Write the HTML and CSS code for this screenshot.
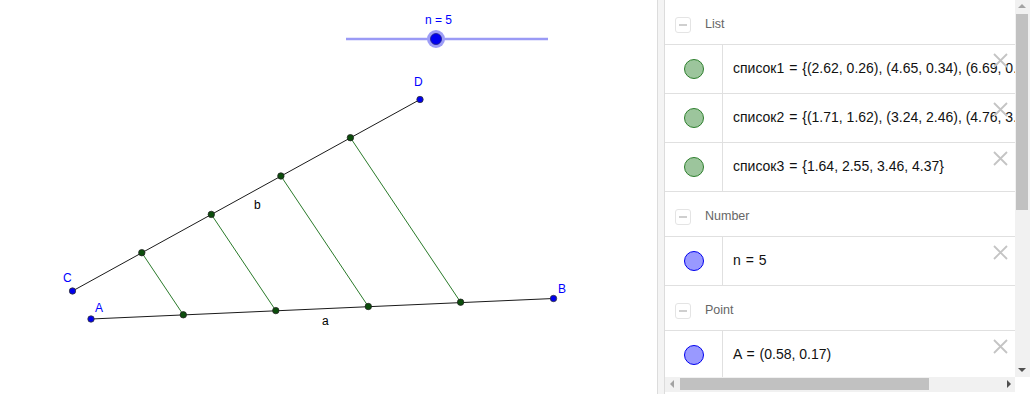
FILE: index.html
```html
<!DOCTYPE html>
<html>
<head>
<meta charset="utf-8">
<link rel="stylesheet" href="styles.css">
</head>
<body>
<div class="app">
  <div class="canvas">
    <svg class="graphics" width="657" height="394" viewBox="0 0 657 394">
      <g class="slider">
        <line x1="346" y1="39" x2="548" y2="39" class="slider-line"/>
        <circle cx="436" cy="39" r="9" class="knob-halo"/>
        <circle cx="436" cy="39" r="5.5" class="knob"/>
        <text x="425" y="24" class="lbl blue">n = 5</text>
      </g>
      <line x1="72.5" y1="291" x2="420" y2="99.5" class="seg"/>
      <line x1="91" y1="319" x2="553.5" y2="298.5" class="seg"/>
      <line x1="141.8" y1="252.7" x2="183.3" y2="314.8" class="gseg"/>
      <line x1="211.3" y1="214.4" x2="275.8" y2="310.6" class="gseg"/>
      <line x1="280.9" y1="176" x2="368.3" y2="306.5" class="gseg"/>
      <line x1="350.4" y1="137.7" x2="460.6" y2="302.2" class="gseg"/>
      <circle cx="141.8" cy="252.7" r="3.2" class="gpt"/>
      <circle cx="211.3" cy="214.4" r="3.2" class="gpt"/>
      <circle cx="280.9" cy="176" r="3.2" class="gpt"/>
      <circle cx="350.4" cy="137.7" r="3.2" class="gpt"/>
      <circle cx="183.3" cy="314.8" r="3.2" class="gpt"/>
      <circle cx="275.8" cy="310.6" r="3.2" class="gpt"/>
      <circle cx="368.3" cy="306.5" r="3.2" class="gpt"/>
      <circle cx="460.6" cy="302.2" r="3.2" class="gpt"/>
      <circle cx="72.5" cy="291" r="3.2" class="bpt"/>
      <circle cx="91" cy="319" r="3.2" class="bpt"/>
      <circle cx="420" cy="99.5" r="3.2" class="bpt"/>
      <circle cx="553.5" cy="298.5" r="3.2" class="bpt"/>
      <text x="63" y="282" class="lbl blue">C</text>
      <text x="95" y="312" class="lbl blue">A</text>
      <text x="414" y="86" class="lbl blue">D</text>
      <text x="558" y="293" class="lbl blue">B</text>
      <text x="322" y="325" class="lbl">a</text>
      <text x="254" y="209" class="lbl">b</text>
    </svg>
  </div>
  <div class="divider"></div>
  <div class="panel">
    <div class="algebra">
      <div class="group-header"><span class="toggle"></span><span class="gtitle">List</span></div>
      <div class="item">
        <div class="marker"><span class="dot green"></span></div>
        <div class="expr">список1 <span class="eq">=</span> {(2.62, 0.26), (4.65, 0.34), (6.69, 0.42), (8.72, 0.5)}</div>
        <svg class="del" width="15" height="15" viewBox="0 0 15 15"><path d="M1 1L14 14M14 1L1 14"/></svg>
      </div>
      <div class="item">
        <div class="marker"><span class="dot green"></span></div>
        <div class="expr">список2 <span class="eq">=</span> {(1.71, 1.62), (3.24, 2.46), (4.76, 3.3), (6.29, 4.14)}</div>
        <svg class="del" width="15" height="15" viewBox="0 0 15 15"><path d="M1 1L14 14M14 1L1 14"/></svg>
      </div>
      <div class="item">
        <div class="marker"><span class="dot green"></span></div>
        <div class="expr">список3 <span class="eq">=</span> {1.64, 2.55, 3.46, 4.37}</div>
        <svg class="del" width="15" height="15" viewBox="0 0 15 15"><path d="M1 1L14 14M14 1L1 14"/></svg>
      </div>
      <div class="group-header"><span class="toggle"></span><span class="gtitle">Number</span></div>
      <div class="item">
        <div class="marker"><span class="dot blue"></span></div>
        <div class="expr">n <span class="eq">=</span> 5</div>
        <svg class="del" width="15" height="15" viewBox="0 0 15 15"><path d="M1 1L14 14M14 1L1 14"/></svg>
      </div>
      <div class="group-header"><span class="toggle"></span><span class="gtitle">Point</span></div>
      <div class="item">
        <div class="marker"><span class="dot blue"></span></div>
        <div class="expr">A <span class="eq">=</span> (0.58, 0.17)</div>
        <svg class="del" width="15" height="15" viewBox="0 0 15 15"><path d="M1 1L14 14M14 1L1 14"/></svg>
      </div>
    </div>
    <div class="vscroll">
      <div class="arrow up"></div>
      <div class="vtrack"><div class="vthumb"></div></div>
      <div class="arrow down"></div>
    </div>
    <div class="hscroll">
      <div class="arrow left"></div>
      <div class="htrack"><div class="hthumb"></div></div>
      <div class="arrow right"></div>
    </div>
    <div class="corner"></div>
  </div>
</div>
</body>
</html>
```

FILE: styles.css
```css
html, body {
  margin: 0;
  padding: 0;
  background: #fff;
}
.app {
  display: flex;
  width: 1032px;
  height: 394px;
  overflow: hidden;
}
.canvas {
  width: 657px;
  height: 394px;
  flex: none;
}
.graphics {
  display: block;
}
.slider-line {
  stroke: #9a9af5;
  stroke-width: 2.5;
}
.knob-halo {
  fill: #9d9df7;
}
.knob {
  fill: #0000f0;
  stroke: #202080;
  stroke-width: 0.8;
}
.seg {
  stroke: #1a1a1a;
  stroke-width: 1;
}
.gseg {
  stroke: #2a7a2a;
  stroke-width: 1;
}
.gpt {
  fill: #0b4d0b;
  stroke: #222;
  stroke-width: 0.8;
}
.bpt {
  fill: #0000ee;
  stroke: #333;
  stroke-width: 0.8;
}
.lbl {
  font-family: "Liberation Sans", Arial, sans-serif;
  font-size: 12px;
  fill: #000;
}
.lbl.blue {
  fill: #0000ff;
}
.divider {
  width: 6px;
  flex: none;
  background: #f4f4f4;
  border-left: 1px solid #dcdcdc;
  border-right: 1px solid #dcdcdc;
}
.panel {
  width: 365px;
  height: 392px;
  flex: none;
  display: grid;
  grid-template-columns: 350px 15px;
  grid-template-rows: 377px 15px;
}
.algebra {
  overflow: hidden;
  background: #fff;
}
.group-header {
  height: 44px;
  border-bottom: 1px solid #e0e0e0;
  display: flex;
  align-items: center;
  position: relative;
}
.toggle {
  box-sizing: border-box;
  width: 16px;
  height: 16px;
  margin-left: 10px;
  margin-top: 5px;
  border: 1px solid #e4e4e4;
  border-radius: 3px;
  display: flex;
  align-items: center;
  justify-content: center;
}
.toggle::before {
  content: "";
  width: 8px;
  height: 2px;
  background: #cfcfcf;
}
.gtitle {
  margin-left: 14px;
  font-family: "Liberation Sans", Arial, sans-serif;
  font-size: 12.5px;
  color: #666;
  margin-top: 3px;
}
.item {
  height: 48px;
  border-bottom: 1px solid #e0e0e0;
  display: flex;
  position: relative;
}
.marker {
  width: 57px;
  flex: none;
  border-right: 1px solid #e0e0e0;
  display: flex;
  align-items: center;
  justify-content: center;
}
.dot {
  box-sizing: border-box;
  width: 20px;
  height: 20px;
  border-radius: 50%;
  border: 1px solid;
}
.dot.green {
  background: #9cc59c;
  border-color: #2d7f2d;
}
.dot.blue {
  background: #9999ff;
  border-color: #0000ee;
}
.expr {
  padding-left: 10px;
  line-height: 47px;
  white-space: nowrap;
  font-family: "Liberation Sans", Arial, sans-serif;
  font-size: 14px;
  color: #111;
}
.eq {
  margin: 0 1px;
}
.del {
  position: absolute;
  right: 7px;
  top: 8px;
}
.del path {
  stroke: #c4c4c4;
  stroke-width: 1.8;
  fill: none;
}
.vscroll {
  background: #f1f1f1;
  display: flex;
  flex-direction: column;
}
.arrow {
  flex: none;
  position: relative;
}
.vscroll .arrow {
  height: 14px;
}
.hscroll .arrow {
  width: 14px;
}
.arrow::before {
  content: "";
  position: absolute;
  width: 0;
  height: 0;
}
.arrow.up::before {
  left: 3px;
  top: 4px;
  border-left: 4px solid transparent;
  border-right: 4px solid transparent;
  border-bottom: 4px solid #a3a3a3;
}
.arrow.down::before {
  left: 3px;
  top: 5px;
  border-left: 4px solid transparent;
  border-right: 4px solid transparent;
  border-top: 4px solid #505050;
}
.arrow.left::before {
  left: 5px;
  top: 3px;
  border-top: 4px solid transparent;
  border-bottom: 4px solid transparent;
  border-right: 4px solid #a3a3a3;
}
.arrow.right::before {
  left: 6px;
  top: 3px;
  border-top: 4px solid transparent;
  border-bottom: 4px solid transparent;
  border-left: 4px solid #505050;
}
.vtrack {
  flex: 1;
  padding: 0 2px 0 1px;
}
.vthumb {
  height: 196px;
  background: #c1c1c1;
}
.hscroll {
  background: #f1f1f1;
  display: flex;
}
.htrack {
  flex: 1;
  padding: 1px 0 2px 1px;
}
.hthumb {
  width: 249px;
  height: 100%;
  background: #c1c1c1;
}
.corner {
  background: #fff;
}
```
